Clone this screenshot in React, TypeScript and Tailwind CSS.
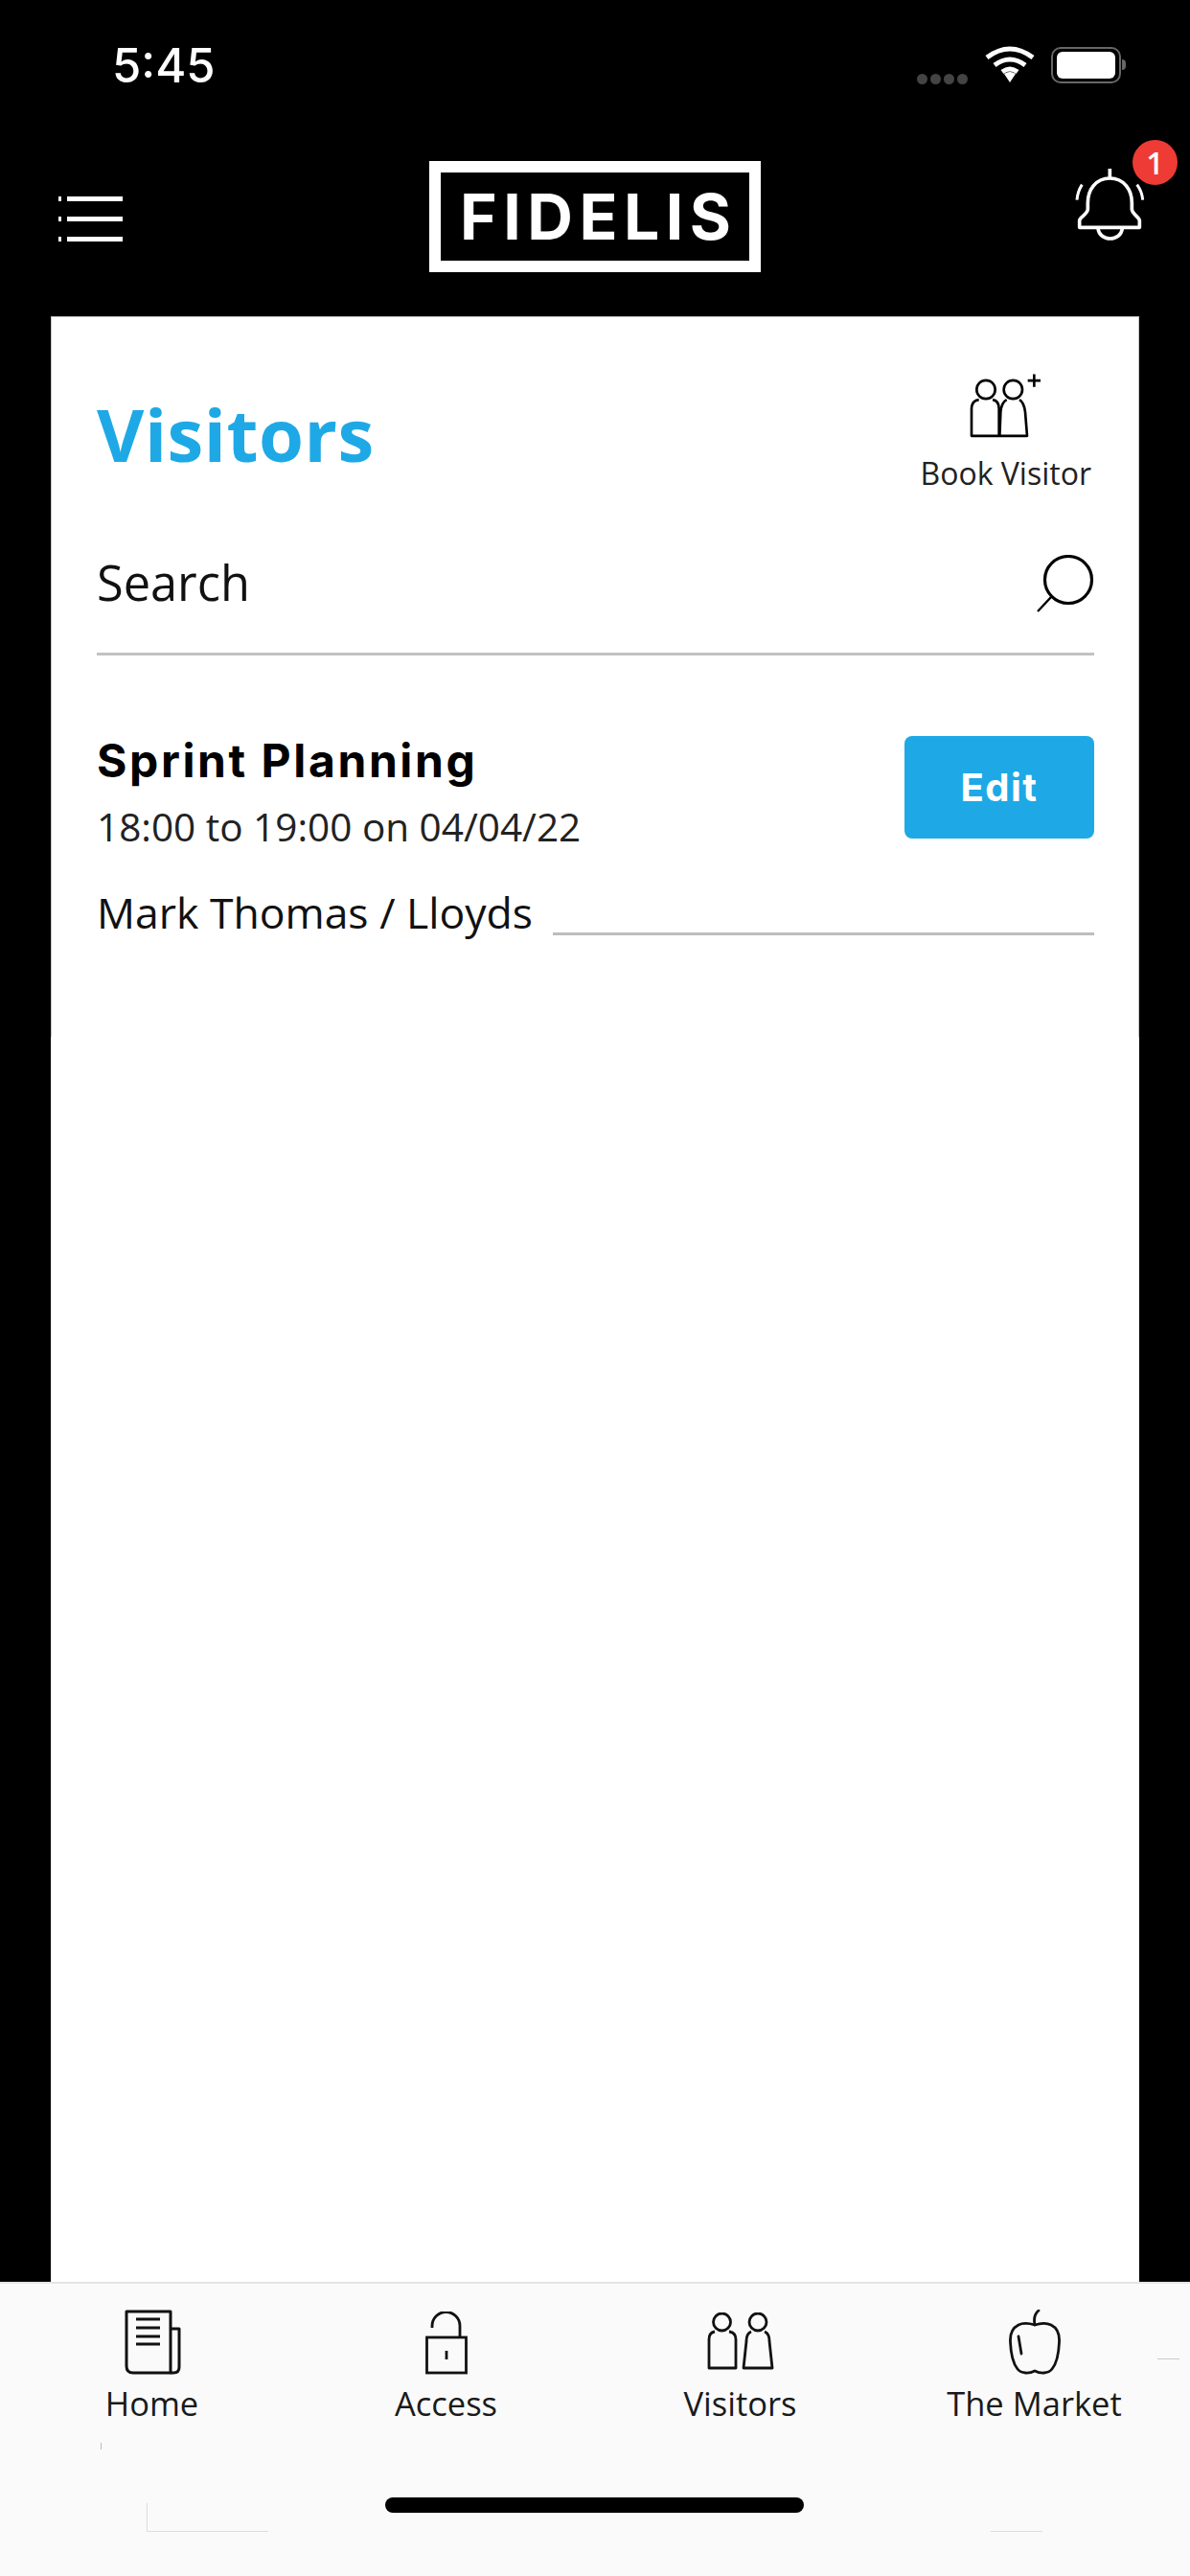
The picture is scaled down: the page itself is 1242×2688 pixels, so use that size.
const sans = "font-['Open_Sans','Noto_Sans',sans-serif]";
const geo = "font-['Inter','Liberation_Sans',sans-serif]";

function Tab({ label, icon }: { label: string; icon: React.ReactNode }) {
  return (
    <div className="flex flex-col items-center">
      <div className="flex h-[70px] items-end">{icon}</div>
      <span className={`mt-[10px] whitespace-nowrap text-[34.5px] leading-[40px] text-[#1a1a1a] ${sans}`}>{label}</span>
    </div>
  );
}

export default function App() {
  return (
    <div className="relative flex h-[2688px] w-[1242px] flex-col overflow-hidden bg-black">
      {/* status bar */}
      <div className="relative flex h-[98px] shrink-0 items-end pb-[4px] pl-[117px]">
        <span className={`text-[49px] font-medium leading-[50px] text-white ${geo}`}>5:45</span>
        <div className="absolute left-[957px] top-[77px] flex gap-[3px]">
          <span className="h-[11px] w-[11px] rounded-full bg-[#444]" />
          <span className="h-[11px] w-[11px] rounded-full bg-[#444]" />
          <span className="h-[11px] w-[11px] rounded-full bg-[#444]" />
          <span className="h-[11px] w-[11px] rounded-full bg-[#444]" />
        </div>
        <svg viewBox="0 0 52 38" className="absolute left-[1028px] top-[48px] h-[38px] w-[52px]" fill="none" stroke="#fff" strokeWidth="5">
          <path d="M2 12 Q26 -6 50 12" />
          <path d="M10 20 Q26 8 42 20" />
          <path d="M18 27 Q26 21 34 27" />
          <path d="M20 29 L26 38 L32 29 Q26 25 20 29 Z" fill="#fff" stroke="none" />
        </svg>
        <div className="absolute left-[1097px] top-[49px] flex h-[38px] w-[73px] items-center justify-center rounded-[10px] border-2 border-[#666]">
          <div className="h-[28px] w-[61px] rounded-[6px] bg-white" />
        </div>
        <div className="absolute left-[1171px] top-[62px] h-[11px] w-[4px] rounded-r-full bg-[#666]" />
      </div>

      {/* header */}
      <div className="relative flex h-[232px] shrink-0 items-center justify-center">
        <div className="mt-[24px] flex h-[116px] w-[346px] flex-col justify-center border-[12px] border-white pl-[20px]">
          <span className={`text-[66px] font-bold leading-[66px] tracking-[6.5px] text-white ${geo}`}>FIDELIS</span>
        </div>
        <div className="absolute left-[61px] top-[107px] flex w-[67px] flex-col gap-[16px]">
          {[0, 1, 2].map((i) => (
            <div key={i} className="flex h-[5px] gap-[6px]">
              <span className="h-[5px] w-[3px] bg-white" />
              <span className="h-[5px] flex-1 bg-white" />
            </div>
          ))}
        </div>
        <svg viewBox="0 0 456 390" className="absolute left-[1090px] top-[42px] h-[130px] w-[152px] text-white" fill="none" stroke="currentColor" strokeWidth="11" strokeLinejoin="round">
          <path d="M205 108 V138" />
          <path d="M205 138 C160 138 136 175 136 215 V235 C136 250 112 258 110 270 V292 H298 V270 C296 258 274 250 274 235 V215 C274 175 250 138 205 138 Z" />
          <path d="M168 294 C172 338 240 338 244 294" />
          <path d="M102 206 Q104 180 118 158" strokeWidth="9" />
          <path d="M308 206 Q306 180 290 158" strokeWidth="9" />
        </svg>
        <div className={`absolute left-[1182px] top-[48px] flex h-[47px] w-[47px] items-center justify-center rounded-full bg-[#ee3b36] text-[32px] font-semibold leading-none text-white ${sans}`}>1</div>
      </div>

      {/* main */}
      <div className="mx-[53px] flex min-h-0 flex-1 flex-col bg-white">
        <div className="flex h-[752px] flex-col border-x border-t border-[#c4c4c4] pl-[47px] pr-[46px]">
          <div className="flex h-[209px] shrink-0 items-start justify-between">
            <h1 className={`mt-[81px] text-[76px] font-bold leading-[82px] tracking-[0.5px] text-[#1ea9e6] ${sans}`}>Visitors</h1>
            <div className="mr-[3px] mt-[57px] flex flex-col items-center">
              <svg viewBox="150 85 240 215" className="h-[72px] w-[80px] text-black" fill="none" stroke="currentColor" strokeWidth="8" strokeLinejoin="round">
                <circle cx="207" cy="140" r="29" />
                <circle cx="292" cy="140" r="29" />
                <path d="M185 172 Q162 175 162 200 V285 H248 V200 Q248 175 228 172" />
                <path d="M272 172 Q256 180 253 210 L250 285 H336 L330 210 Q326 180 312 172" />
                <path d="M358 92 V132 M338 112 H378" />
              </svg>
              <span className={`mt-[16px] text-[32px] leading-[36px] text-[#222] ${sans}`}>Book Visitor</span>
            </div>
          </div>
          <div className="flex h-[144px] shrink-0 items-start justify-between border-b-[3px] border-[#c2c2c2]">
            <span className={`mt-[38px] text-[50.5px] leading-[60px] text-[#111] ${sans}`}>Search</span>
            <svg viewBox="0 0 60 60" className="mt-[39px] h-[60px] w-[60px] text-black" fill="none" stroke="currentColor" strokeWidth="3.2">
              <circle cx="33" cy="26" r="24.5" />
              <path d="M15.5 43.5 L1 59" strokeWidth="2.4" />
            </svg>
          </div>
          <div className="mt-[84px] flex items-start justify-between">
            <div className="flex flex-col">
              <span className={`mt-[1px] text-[48px] font-bold leading-[50px] tracking-[2.6px] text-black ${geo}`}>Sprint Planning</span>
              <span className={`mt-[19px] text-[40.5px] leading-[50px] text-[#222] ${sans}`}>18:00 to 19:00 on 04/04/22</span>
            </div>
            <button className={`flex h-[107px] w-[198px] items-center justify-center rounded-[8px] bg-[#1ea9e6] text-[40px] font-bold tracking-[1.5px] text-white ${geo}`}>Edit</button>
          </div>
          <div className="mt-[34px] flex items-end gap-[21px]">
            <span className={`text-[44.5px] leading-[60px] text-[#111] ${sans}`}>Mark Thomas / Lloyds</span>
            <div className="mb-[6px] h-[3px] flex-1 bg-[#bdbdbd]" />
          </div>
        </div>
        <div className="flex-1" />
      </div>

      {/* tab bar */}
      <div className="relative h-[307px] shrink-0 border-t-2 border-[#e4e4e4] bg-[#fafafa] pl-[5px] pr-[9px] pt-[25px]">
        <div className="grid grid-cols-4">
          <Tab
            label="Home"
            icon={
              <svg viewBox="0 0 60 68" className="h-[68px] w-[60px] text-[#111]" fill="none" stroke="currentColor" strokeWidth="3" strokeLinejoin="round">
                <path d="M3 2 H49 V66 H10 Q3 66 3 59 Z" />
                <path d="M49 20 H58 V60 Q58 66 52 66 H49" />
                <path d="M13 10 H38 M13 19 H38 M13 28 H38 M13 36 H38" />
              </svg>
            }
          />
          <Tab
            label="Access"
            icon={
              <svg viewBox="0 0 44 66" className="h-[66px] w-[44px] text-[#111]" fill="none" stroke="currentColor" strokeWidth="2.8">
                <path d="M7 17 V15 A14.5 14.5 0 0 1 36 15 V27" />
                <rect x="1.5" y="27" width="41" height="37" />
                <path d="M22 41 V50" />
              </svg>
            }
          />
          <Tab
            label="Visitors"
            icon={
              <svg viewBox="0 0 70 60" className="mb-[5px] h-[60px] w-[70px] text-[#111]" fill="none" stroke="currentColor" strokeWidth="2.8" strokeLinejoin="round">
                <circle cx="15.5" cy="10" r="9" />
                <circle cx="53" cy="10" r="9" />
                <path d="M8 20 Q2 21 2 28 V58 H30 V28 Q30 21 23 20" />
                <path d="M46 20 Q41 22 41 30 L38 58 H68 L65 30 Q65 22 60 20" />
              </svg>
            }
          />
          <Tab
            label="The Market"
            icon={
              <svg viewBox="0 0 54 68" className="h-[68px] w-[54px] text-[#111]" fill="none" stroke="currentColor" strokeWidth="2.8" strokeLinecap="round">
                <path d="M27 16 Q25 6 31 1" />
                <path d="M27 16 C20 14 14 14 10 16 C4 19 1 26 1.5 34 C2 46 5 57 9 62 C13 67 21 67 27 64 C33 67 41 67 45 62 C50 56 52 46 52.5 34 C53 26 50 19 44 16 C40 14 33 14 27 16 Z" />
                <path d="M10 28 L13 46" />
              </svg>
            }
          />
        </div>
        <div className="absolute bottom-[66px] left-[402px] h-[16px] w-[437px] rounded-full bg-black" />
        <div className="absolute left-[153px] top-[229px] h-[30px] w-px bg-[#ddd]" />
        <div className="absolute left-[153px] top-[258px] h-px w-[127px] bg-[#ddd]" />
        <div className="absolute left-[1034px] top-[258px] h-px w-[54px] bg-[#ddd]" />
        <div className="absolute left-[1208px] top-[78px] h-px w-[23px] bg-[#ccc]" />
        <div className="absolute left-[105px] top-[166px] h-[7px] w-px bg-[#bbb]" />
      </div>
    </div>
  );
}
